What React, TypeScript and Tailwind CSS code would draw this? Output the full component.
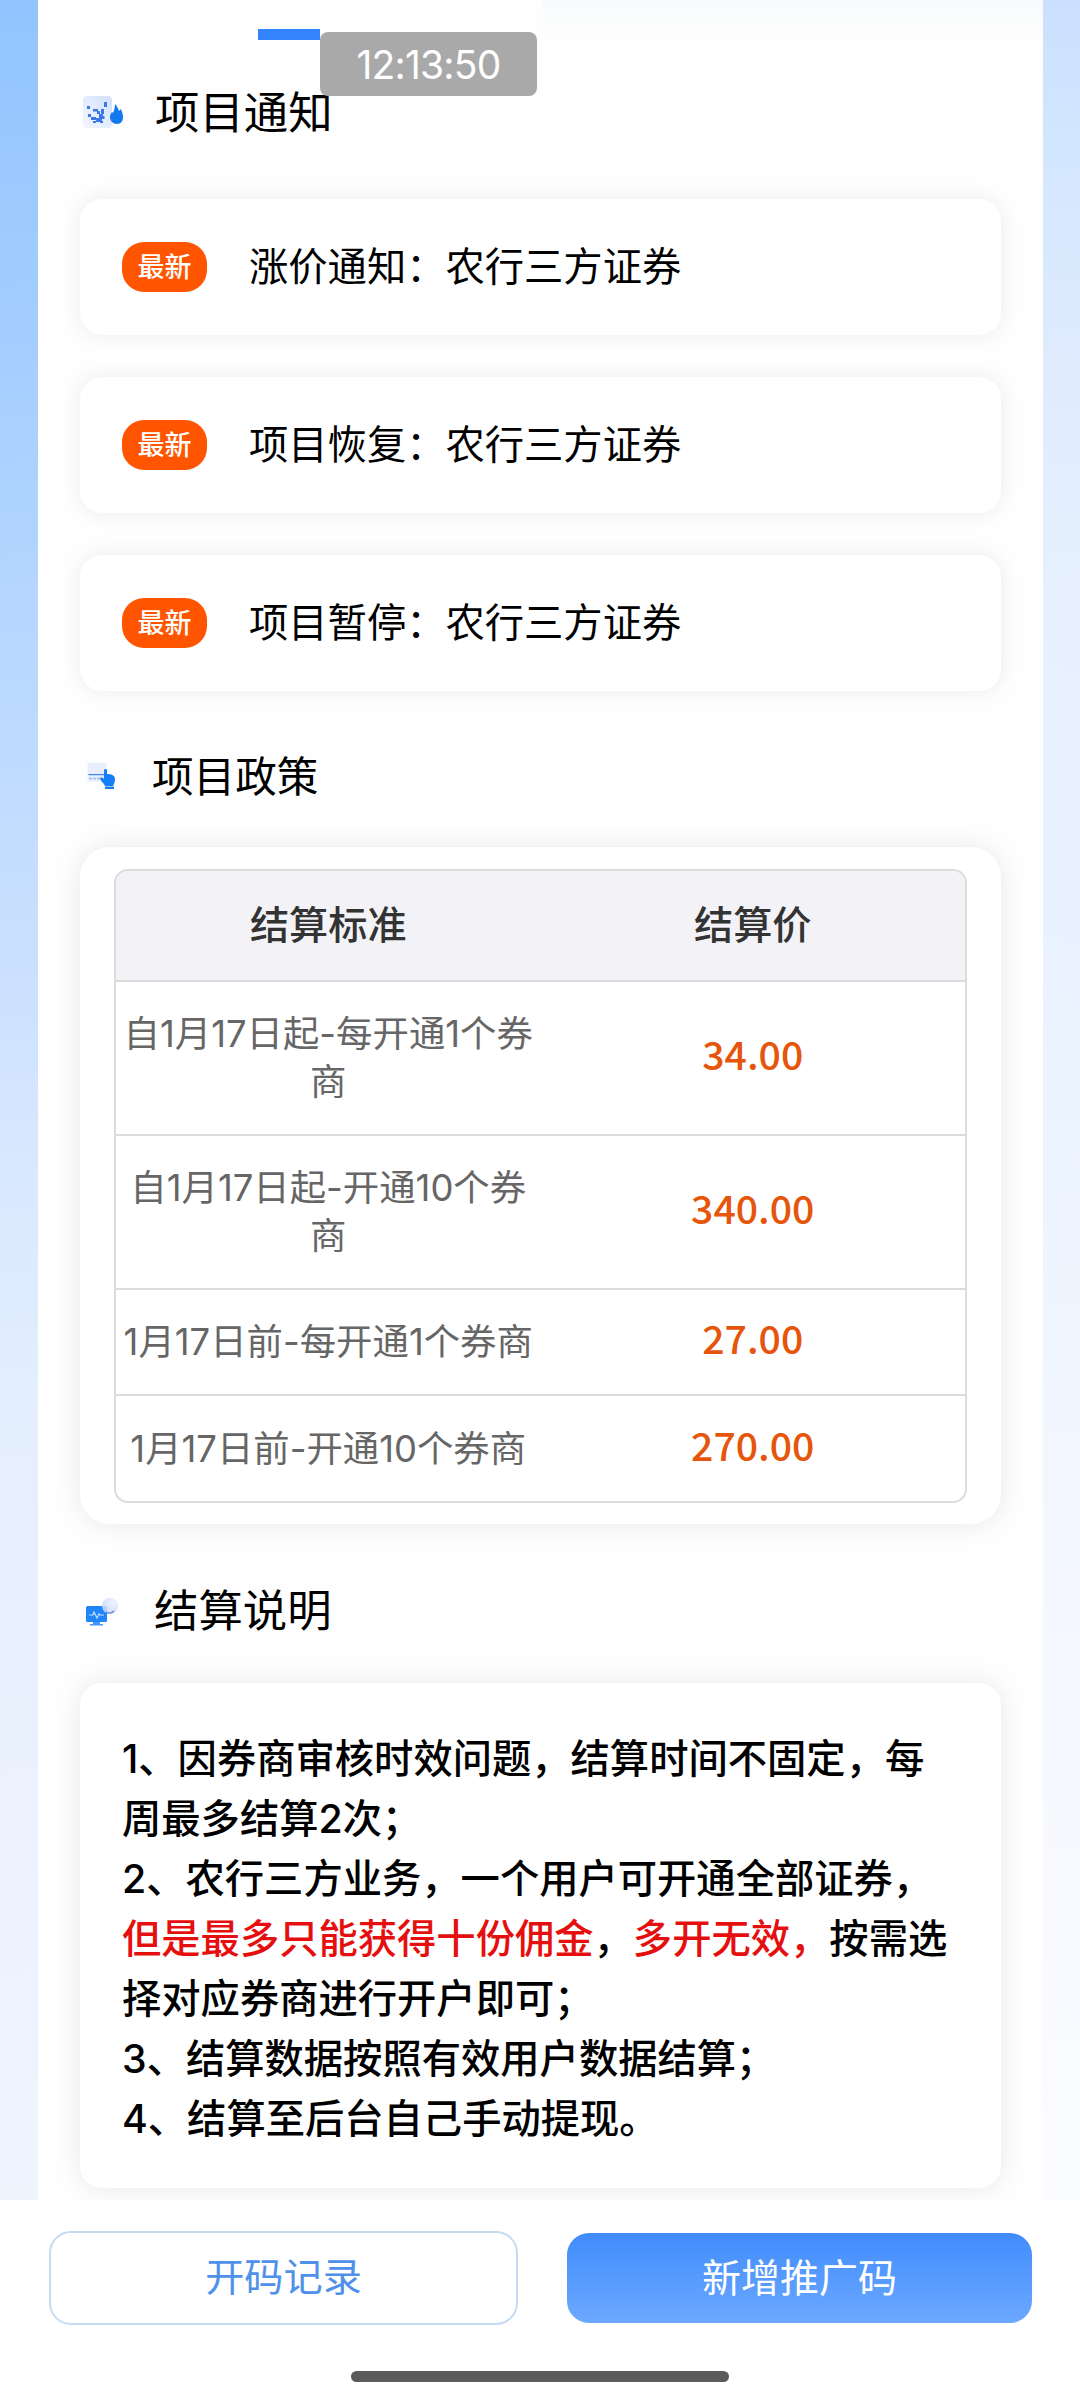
interface PolicyRow {
  label: string[];
  price: string;
}

const notices = ["涨价通知：农行三方证券", "项目恢复：农行三方证券", "项目暂停：农行三方证券"];

const policies: PolicyRow[] = [
  { label: ["自1月17日起-每开通1个券", "商"], price: "34.00" },
  { label: ["自1月17日起-开通10个券", "商"], price: "340.00" },
  { label: ["1月17日前-每开通1个券商"], price: "27.00" },
  { label: ["1月17日前-开通10个券商"], price: "270.00" },
];

function NoticeIcon() {
  return (
    <svg className="h-9 w-[42px]" viewBox="0 0 42 36">
      <defs>
        <linearGradient id="noticeCard" x1="1" y1="0" x2="0" y2="1">
          <stop offset="0" stopColor="#d3e0fd" />
          <stop offset="1" stopColor="#f3f6fe" />
        </linearGradient>
      </defs>
      <rect x="1" y="2" width="29" height="32" rx="4" fill="url(#noticeCard)" />
      <g fill="#3c78e8">
        <rect x="5" y="12" width="3" height="3" />
        <rect x="22" y="8" width="3" height="5" />
        <rect x="11" y="15" width="5" height="2.5" />
        <rect x="15" y="17" width="3" height="3" />
        <rect x="19" y="15" width="3" height="5" />
        <rect x="6" y="20" width="3" height="3" />
        <rect x="17" y="20" width="4" height="4" />
        <rect x="9" y="23" width="5" height="3" />
        <rect x="14" y="24" width="6" height="4" />
        <rect x="20" y="22" width="2.5" height="3" />
        <rect x="11" y="27" width="3" height="2" />
        <rect x="18" y="27" width="3" height="2" />
      </g>
      <path d="M33 10c2 2 3 4 4 7l2-2c1 3 2 5 2 8 0 4-2 7-6 7s-7-3-7-7c0-2 1-4 2-5l1 1c1-3 2-5 2-9z" fill="#1478f0" />
    </svg>
  );
}

function PolicyIcon() {
  return (
    <svg className="h-7 w-[30px]" viewBox="0 0 30 28">
      <rect x="0.5" y="0.5" width="19" height="19" rx="2" fill="#e9eefd" />
      <rect x="1.5" y="12" width="16" height="1.2" fill="#3c86f0" />
      <path d="M2 16.5h12" stroke="#9dbdf5" strokeWidth="1.5" strokeDasharray="3 1" />
      <path
        d="M17 8.5c0-2 3-2 3 0V12c4 0 8 1 8 5 0 3-1 5-2 7h-8c-1-3-4-4-5-8 2-1 3 0 4 1z"
        fill="#1580f5"
      />
      <rect x="18" y="24.5" width="9" height="2.5" rx="0.5" fill="#1c7af0" />
    </svg>
  );
}

function ExplainIcon() {
  return (
    <svg className="h-7 w-[34px]" viewBox="0 0 34 28">
      <defs>
        <radialGradient id="globe" cx="0.7" cy="0.3" r="0.8">
          <stop offset="0" stopColor="#edf1ff" />
          <stop offset="1" stopColor="#c4d4fb" />
        </radialGradient>
      </defs>
      <rect x="1" y="8" width="21" height="16" rx="1.5" fill="#2085f8" />
      <path d="M4 17h4l1-3 3 6 2-4 1 1h4" fill="none" stroke="#c9e0ff" strokeWidth="1.2" />
      <path d="M8 24h7v2h3v1.5H5V26h3z" fill="#4495f4" />
      <circle cx="25" cy="8" r="8" fill="url(#globe)" fillOpacity="0.85" />
      <path d="M21 14c3 2 6 1 8-1" fill="none" stroke="#5c86d8" strokeWidth="1.3" />
    </svg>
  );
}

export default function App() {
  return (
    <div
      className="relative flex h-[2400px] w-[1080px] flex-col overflow-hidden bg-white text-black"
      style={{ fontFamily: '"Noto Sans CJK SC", "Noto Sans", sans-serif' }}
    >
      <div className="flex h-[2200px] justify-between overflow-hidden">
        <div className="w-[38px] shrink-0 bg-[linear-gradient(178deg,#92c4ff_0%,#a5ceff_16%,#bedbff_34%,#cbe0ff_44%,#d8e8ff_53%,#e3eefe_63%,#eaf1fe_76%,#eff5ff_100%)]" />

        <main className="w-[1005px] shrink-0 bg-[#fefefe]">
          {/* Tab strip, first tab active */}
          <div className="flex h-10">
            <div className="w-[505px] pt-[29px]">
              <div className="ml-[220px] h-[11px] w-[62px] bg-[#3583fb]" />
            </div>
            <div className="h-[38px] flex-1 bg-linear-to-b from-[#f8fafc] to-[#fefefe]" />
          </div>

          <div className="px-[42px]">
            <h2 className="flex h-[159px] items-start pt-[37px]">
              <span className="mt-[17px] ml-[2px] flex w-[73px]">
                <NoticeIcon />
              </span>
              <span className="text-[44.4px] leading-[66px] font-normal">项目通知</span>
            </h2>

            <div className="flex flex-col gap-[42px]">
              {notices.map((notice) => (
                <div
                  key={notice}
                  className="flex h-[136px] items-center rounded-[22px] bg-white px-[42px] shadow-[0_0_20px_rgba(0,0,0,0.08)]"
                >
                  <span className="flex h-[50px] w-[85px] items-center justify-center rounded-[22px] bg-[#ff5500] pb-[3px] text-[27px] leading-none font-medium text-white">
                    最新
                  </span>
                  <span className="ml-[42px] pb-[6px] text-[39.3px] leading-none">{notice}</span>
                </div>
              ))}
            </div>

            <h2 className="flex h-[156px] items-start pt-[51px]">
              <span className="mt-[20px] ml-[7px] flex w-[65px]">
                <PolicyIcon />
              </span>
              <span className="text-[41.6px] leading-[64px] font-normal">项目政策</span>
            </h2>

            <section className="h-[677px] rounded-[30px] bg-white px-[34px] pt-[22px] shadow-[0_0_26px_rgba(0,0,0,0.09)]">
              <div className="h-[634px] w-[853px] overflow-hidden rounded-[14px] border-2 border-[#dcdcdc]">
                <div className="grid h-[111px] grid-cols-2 items-center border-b-2 border-[#dcdcdc] bg-[#f2f2f7] pb-[6px] text-center text-[39.2px] font-medium text-[#333]">
                  <span>结算标准</span>
                  <span>结算价</span>
                </div>
                {policies.map((row, i) => (
                  <div
                    key={row.price}
                    className={`grid grid-cols-2 items-center text-center ${
                      row.label.length > 1 ? "h-[154px]" : "h-[106px]"
                    } ${i < policies.length - 1 ? "border-b-2 border-[#dcdcdc]" : ""}`}
                  >
                    <p
                      className="text-[36.4px] leading-[48px] whitespace-nowrap text-[#666]"
                      style={{ fontFamily: 'Inter, "Noto Sans CJK SC", sans-serif' }}
                    >
                      {row.label.map((line) => (
                        <span key={line} className="block">
                          {line}
                        </span>
                      ))}
                    </p>
                    <span className="pb-[8px] text-[39.2px] leading-none font-medium text-[#e5560c]">{row.price}</span>
                  </div>
                ))}
              </div>
            </section>

            <h2 className="flex h-[159px] items-start pt-[51px]">
              <span className="mt-[23px] ml-[5px] flex w-[69px]">
                <ExplainIcon />
              </span>
              <span className="text-[44.4px] leading-[66px] font-normal">结算说明</span>
            </h2>

            <section
              className="h-[505px] rounded-[22px] bg-white px-[42px] pt-[46px] text-[39.3px] leading-[60px] font-medium whitespace-nowrap shadow-[0_0_26px_rgba(0,0,0,0.09)]"
              style={{ fontFamily: 'Inter, "Noto Sans CJK SC", sans-serif' }}
            >
              <p>
                1、因券商审核时效问题，结算时间不固定，每
                <br />
                周最多结算2次；
              </p>
              <p>
                2、农行三方业务，一个用户可开通全部证券，
                <br />
                <span className="text-[#e60f0f]">但是最多只能获得十份佣金</span>，
                <span className="text-[#e60f0f]">多开无效，</span>按需选
                <br />
                择对应券商进行开户即可；
              </p>
              <p>3、结算数据按照有效用户数据结算；</p>
              <p>4、结算至后台自己手动提现。</p>
            </section>
          </div>
        </main>

        <div className="w-[37px] shrink-0 bg-[linear-gradient(182deg,#cbe0ff_0%,#d6e9ff_10%,#deeafd_15%,#e6f0fe_27%,#e8f1ff_38%,#eef5ff_58%,#f6f8ff_78%,#fafcff_100%)]" />
      </div>

      {/* Bottom actions */}
      <footer className="flex h-[200px] flex-col items-center bg-white">
        <div className="flex h-[125px] w-full items-end pl-[49px]">
          <button className="h-[94px] w-[469px] rounded-[22px] border-2 border-[#c6dbf2] bg-white pb-[6px] text-[39.2px] leading-none text-[#4f90ea]">
            开码记录
          </button>
          <button className="mb-[2px] ml-[49px] h-[90px] w-[465px] rounded-[22px] bg-linear-to-b from-[#408cfc] to-[#6ca8ff] pb-[6px] text-[39px] leading-none text-white">
            新增推广码
          </button>
        </div>
        <div className="mt-[46px] h-[11px] w-[378px] rounded-full bg-[#5c5c5c]" />
      </footer>

      {/* Clock overlay */}
      <div
        className="absolute top-[32px] left-[320px] flex h-[64px] w-[217px] items-center justify-center rounded-lg bg-[#a9a9a9] text-[39px] leading-none tracking-[-0.8px] text-white"
        style={{ fontFamily: "Inter, sans-serif" }}
      >
        12:13:50
      </div>
    </div>
  );
}
